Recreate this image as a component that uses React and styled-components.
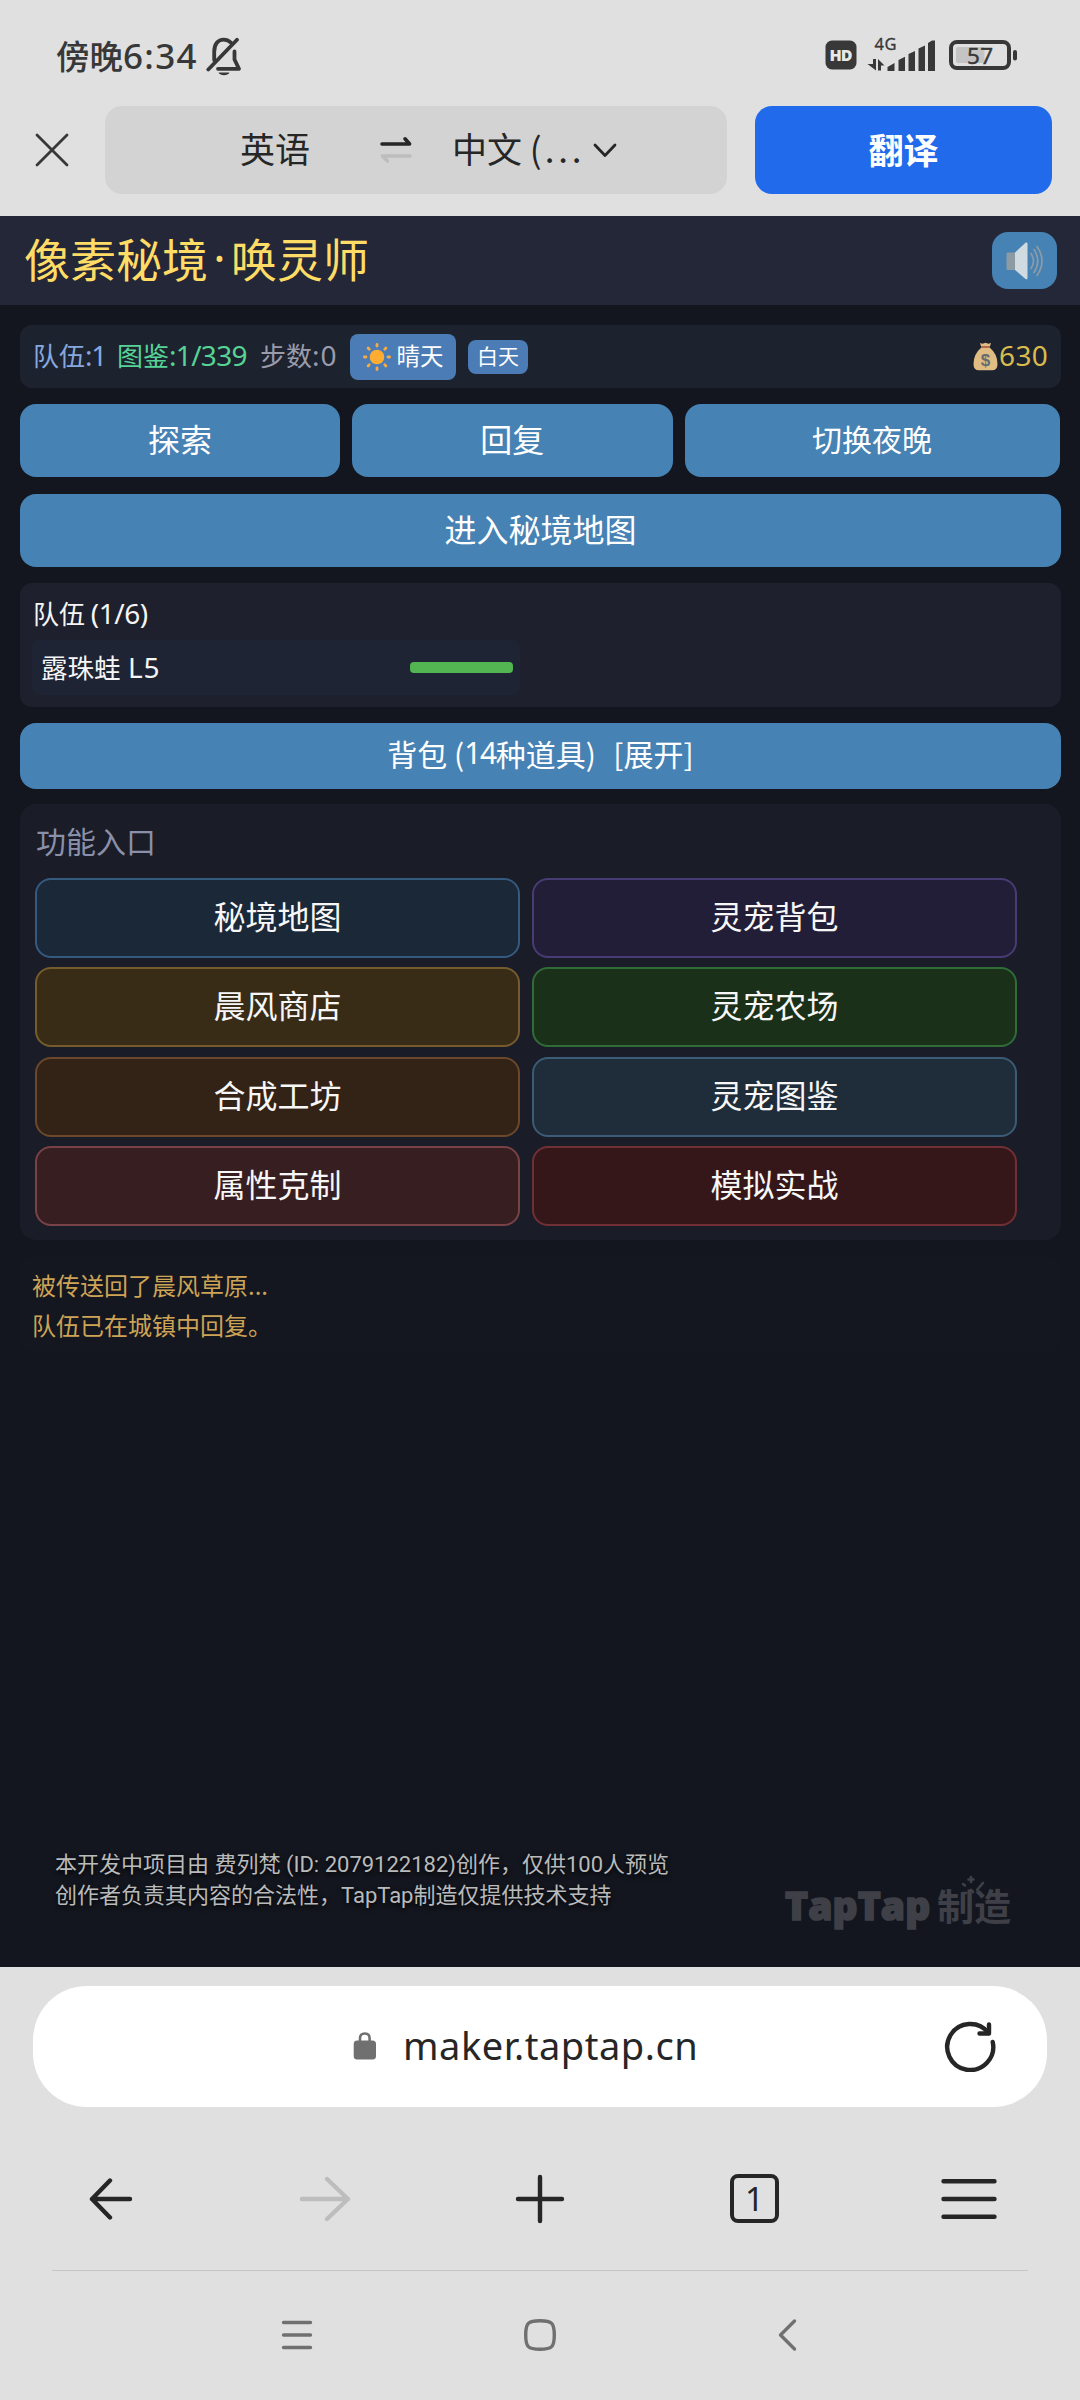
import React from "react";
import styled, { createGlobalStyle } from "styled-components";

const Global = createGlobalStyle`
  * { box-sizing: border-box; }
  html, body { margin: 0; padding: 0; background: #e0e0e0; }
  body { font-family: "Noto Sans CJK SC", "Noto Sans", sans-serif; color: #262626; }
  svg { display: block; flex: none; }
`;

const Phone = styled.div`
  width: 1080px;
  height: 2400px;
  display: flex;
  flex-direction: column;
  background: #e0e0e0;
  overflow: hidden;
`;

/* ---------- system status bar ---------- */
const StatusBar = styled.header`
  height: 106px;
  padding: 30px 62px 31px 56px;
  display: flex;
  justify-content: space-between;
  align-items: flex-start;
  color: #383838;
`;
const StatusGroup = styled.div`
  display: flex;
  align-items: flex-start;
  padding-top: 7px;
`;
const Clock = styled.div`
  font-size: 33.5px;
  line-height: 36px;
  font-weight: 500;
  white-space: nowrap;
  width: 150px;
`;
const ClockDigits = styled.span`
  font-family: "Noto Sans", sans-serif;
  font-size: 35px;
  letter-spacing: 1.3px;
`;

/* ---------- translate bar ---------- */
const TranslateBar = styled.div`
  height: 110px;
  padding: 0 28px 22px 35px;
  display: flex;
  align-items: stretch;
`;
const CloseButton = styled.div`
  width: 70px;
  display: flex;
  align-items: center;
  flex: none;
`;
const LanguagePill = styled.div`
  width: 622px;
  height: 88px;
  flex: none;
  border-radius: 17px;
  background: #d3d3d3;
  display: flex;
  align-items: center;
  padding-left: 135px;
  font-size: 35px;
  line-height: 48px;
  white-space: nowrap;
`;
const Language = styled.div`
  width: ${(p) => p.$width}px;
  padding-left: ${(p) => p.$indent || 0}px;
  padding-bottom: 4px;
`;
const Dots = styled.span`
  margin-left: 3px;
  letter-spacing: 3.8px;
`;
const TranslateButton = styled.div`
  width: 297px;
  height: 88px;
  margin-left: 28px;
  border-radius: 17px;
  background: #216aeb;
  color: #fff;
  font-size: 35px;
  font-weight: 700;
  display: flex;
  align-items: center;
  justify-content: center;
  padding-bottom: 4px;
`;

/* ---------- game page ---------- */
const Game = styled.main`
  height: 1751px;
  background: #13161e;
  display: flex;
  flex-direction: column;
`;
const GameHeader = styled.div`
  height: 89px;
  flex: none;
  background: #242737;
  display: flex;
  align-items: center;
  justify-content: space-between;
  padding: 0 23px 0 24px;
`;
const GameTitle = styled.h1`
  margin: 0;
  font-size: 46px;
  line-height: 60px;
  font-weight: 400;
  color: #ffdc66;
  padding-bottom: 7px;
  display: flex;
`;
const TitleDot = styled.span`
  width: 23px;
  font-family: "Noto Sans", sans-serif;
  text-align: center;
`;
const SoundButton = styled.div`
  width: 65px;
  height: 57px;
  border-radius: 16px;
  background: #4682b4;
  display: flex;
  align-items: center;
  justify-content: center;
`;
const Content = styled.div`
  padding: 20px 19px 0 20px;
  display: flex;
  flex-direction: column;
`;
const Stats = styled.div`
  height: 63px;
  border-radius: 12px;
  background: #1d222f;
  display: flex;
  align-items: center;
  justify-content: space-between;
  padding: 0 13px 0 13px;
`;
const StatGroup = styled.div`
  display: flex;
  align-items: center;
`;
const Stat = styled.div`
  width: ${(p) => p.$width}px;
  color: ${(p) => p.$color};
  font-size: 26px;
  line-height: 36px;
  white-space: nowrap;
  padding-bottom: 4px;
`;
const Num = styled.span`
  font-family: "Noto Sans", sans-serif;
  font-size: ${(p) => p.$font || 28}px;
  letter-spacing: ${(p) => p.$track || 0}px;
`;
const Badge = styled.div`
  width: ${(p) => p.$width}px;
  height: ${(p) => p.$height}px;
  margin-right: 12px;
  border-radius: 8px;
  background: #4b7cb5;
  color: #fff;
  font-size: ${(p) => p.$font}px;
  display: flex;
  align-items: center;
  justify-content: center;
  gap: 6px;
  line-height: 30px;
`;
const BadgeLabel = styled.span`
  padding-bottom: 4px;
`;
const Money = styled.div`
  display: flex;
  align-items: center;
  gap: 1px;
  color: #d8bc4e;
`;
const ActionRow = styled.div`
  margin-top: 16px;
  display: grid;
  grid-template-columns: 320px 320.5px 375px;
  gap: 12px;
`;
const Action = styled.div`
  height: ${(p) => p.$height || 73}px;
  margin-top: ${(p) => p.$top || 0}px;
  border-radius: 16px;
  background: #4682b4;
  color: #fff;
  font-size: ${(p) => p.$font || 32}px;
  line-height: 46px;
  display: flex;
  align-items: center;
  justify-content: center;
  padding-bottom: 6px;
  white-space: pre;
`;
const BagState = styled.span`
  margin-left: 4px;
`;
const TeamPanel = styled.section`
  height: 124px;
  margin-top: 16px;
  border-radius: 12px;
  background: #1e202d;
  padding: 11px 12px;
`;
const TeamTitle = styled.div`
  height: 46px;
  padding-left: 1px;
  font-size: 26px;
  line-height: 37px;
  color: #f5f5f5;
`;
const Pet = styled.div`
  width: 488px;
  height: 55px;
  border-radius: 8px;
  background: #1e2434;
  display: flex;
  align-items: center;
  justify-content: space-between;
  padding: 0 7px 0 9px;
`;
const PetName = styled.div`
  font-size: 26.5px;
  line-height: 36px;
  color: #f5f5f5;
  padding-bottom: 2px;
`;
const PetLevel = styled(Num)`
  margin-left: 1.5px;
`;
const HealthBar = styled.div`
  width: 103px;
  height: 11px;
  border-radius: 4px;
  background: #52b552;
`;
const MenuPanel = styled.section`
  height: 436px;
  margin-top: 15px;
  border-radius: 16px;
  background: #1a1c27;
  padding: 14px 15px 15px;
`;
const MenuTitle = styled.div`
  height: 60px;
  padding-left: 1px;
  font-size: 30px;
  line-height: 44px;
  color: #8b90aa;
`;
const MenuGrid = styled.div`
  display: grid;
  grid-template-columns: 485px 485px;
  grid-auto-rows: 80px;
  column-gap: 12px;
  row-gap: 9.3px;
`;
const MenuItem = styled.div`
  border: 2px solid ${(p) => p.$border};
  border-radius: 16px;
  background: ${(p) => p.$bg};
  color: #f7f7f7;
  font-size: 32px;
  line-height: 46px;
  display: flex;
  align-items: center;
  justify-content: center;
  padding-bottom: 6px;
`;
const Log = styled.section`
  margin-top: 16px;
  height: 96px;
  border-radius: 12px;
  background: #14171f;
  padding: 9px 12px;
  font-size: 24px;
  line-height: 40px;
  color: #cda355;
`;
const LogEntry = styled.div`
  white-space: nowrap;
`;
const Credits = styled.footer`
  margin-top: auto;
  height: 127px;
  padding: 0 69px 0 55px;
  display: flex;
  justify-content: space-between;
`;
const Disclaimer = styled.div`
  padding-top: 9px;
  font-family: Roboto, "Noto Sans CJK SC", sans-serif;
  font-size: 22px;
  line-height: 31px;
  color: #b9babb;
  white-space: nowrap;
  text-shadow: 0 2px 5px #000;
`;
const Brand = styled.div`
  display: flex;
  color: #3f4047;
  height: 100px;
  padding-top: 40px;
`;
const BrandName = styled.div`
  width: 152px;
  font-family: "Open Sans", sans-serif;
  font-weight: 800;
  font-size: 39px;
  line-height: 50px;
  letter-spacing: 0.1px;
  -webkit-text-stroke: 1.6px #3f4047;
`;
const BrandSuffix = styled.div`
  position: relative;
  width: 74px;
  font-size: 37px;
  line-height: 50px;
  font-weight: 700;
`;
const Sparkles = styled.svg`
  position: absolute;
  left: 24px;
  top: -5px;
`;

/* ---------- browser controls ---------- */
const AddressArea = styled.div`
  height: 153px;
  padding: 19px 33px 0;
`;
const Address = styled.div`
  height: 121px;
  border-radius: 54px;
  background: #fff;
  display: flex;
  align-items: center;
  justify-content: space-between;
  padding: 0 51px 1px 320px;
`;
const AddressText = styled.div`
  display: flex;
  align-items: center;
  gap: 26px;
  font-family: "Noto Sans", sans-serif;
  font-size: 38px;
  line-height: 50px;
  color: #262626;
`;
const Host = styled.span`
  letter-spacing: 0.55px;
  padding-bottom: 2px;
`;
const BrowserNav = styled.nav`
  height: 151px;
  margin: 0 52px;
  padding-top: 7px;
  border-bottom: 1px solid #c6c6c6;
  display: flex;
  align-items: flex-start;
  justify-content: space-between;
`;
const NavSlot = styled.div`
  width: 118px;
  height: 143px;
  display: flex;
  align-items: center;
  justify-content: center;
`;
const TabCount = styled.div`
  width: 49px;
  height: 49px;
  border: 4.4px solid #262626;
  border-radius: 8px;
  display: flex;
  align-items: center;
  justify-content: center;
  font-family: "Noto Sans", sans-serif;
  font-size: 33px;
  line-height: 40px;
`;
const SystemNav = styled.nav`
  flex: 1;
  padding: 0 278px 2px 280px;
  display: flex;
  align-items: center;
  justify-content: space-between;
`;

const Line = ({ w, h, color = "#262626", width = 4.4, d, children }) => (
  <svg width={w} height={h} viewBox={`0 0 ${w} ${h}`} fill="none" stroke={color} strokeWidth={width} strokeLinecap="round" strokeLinejoin="round">
    {d && <path d={d} />}
    {children}
  </svg>
);

const BellOff = () => (
  <svg width="36" height="39" viewBox="0 0 36 39" fill="none" stroke="#383838" strokeWidth="3.8" strokeLinecap="round" strokeLinejoin="round">
    <path d="M8.2 23V15C8.2 7 12 2.6 17.7 2.6C20.6 2.6 23.3 3.8 25 5.8" />
    <path d="M28.5 14.5V22.5L33 31.8H12" />
    <path d="M31 2.8L2.3 32.5" />
    <path d="M12.5 35.5H23.5C22 39.2 14 39.2 12.5 35.5Z" fill="#383838" stroke="none" />
  </svg>
);

const StatusIcons = () => (
  <svg width="193" height="45" viewBox="825 30 193 45" fill="#383838">
    <rect x="825.5" y="40.5" width="31" height="29" rx="6.5" />
    <text x="841" y="61.2" fontSize="16" fontWeight="800" fontFamily="Open Sans, sans-serif" fill="#e8e8e8" textAnchor="middle" textLength="23">HD</text>
    <text x="874.5" y="50" fontSize="16.5" fontFamily="Noto Sans, sans-serif" textLength="22" stroke="#383838" strokeWidth="0.3">4G</text>
    <path d="M873 59H876V70.5L867.5 64H873ZM878 70.5V59L884.5 65.5H881V70.5Z" />
    <path d="M887.5 71V67L894.5 63V71ZM898.5 71V60L905 56.8V71ZM908.5 71V54L915 51V71ZM918.5 71V48.5L925 45.5V71ZM928 71V43L932 40.5H935V71Z" />
    <rect x="956" y="47" width="28.5" height="16" rx="2" fill="#c4c4c4" />
    <rect x="951" y="42" width="58" height="26" rx="6" fill="none" stroke="#383838" strokeWidth="4" />
    <rect x="1013" y="50" width="4" height="10.5" rx="2" />
    <text x="980" y="63.5" fontSize="22.5" fontFamily="Noto Sans, sans-serif" textAnchor="middle" textLength="26" stroke="#383838" strokeWidth="0.4">57</text>
  </svg>
);

const Swap = () => (
  <svg width="32" height="28" viewBox="0 0 32 28" fill="none" strokeWidth="3.6" strokeLinecap="round" strokeLinejoin="round">
    <path d="M2 8H29.6L25 2.8" stroke="#262626" />
    <path d="M30 20H2.4L7.5 25" stroke="#bdbdbd" />
  </svg>
);

const Speaker = () => (
  <svg width="40" height="40" viewBox="0 0 40 40">
    <path d="M1.5 13Q1.5 11.5 3 11.5H10V29H3Q1.5 29 1.5 27.5Z" fill="#8d9ba5" />
    <path d="M10 11.5L20.5 1.8Q22.5 1 22.5 3V37Q22.5 39 20.5 38L10 29Z" fill="#cfdae1" />
    <path d="M26 12.5Q31 20 26 27.5M29 8.5Q36.5 20 29 31.5M32 5.5Q42 20 32 34.5" fill="none" stroke="#8d9ba5" strokeWidth="1.7" strokeLinecap="round" />
  </svg>
);

const Sun = () => (
  <svg width="28" height="28" viewBox="-14 -14 28 28">
    <circle r="7.3" fill="#ffac33" />
    {[0, 45, 90, 135, 180, 225, 270, 315].map((a) => (
      <path key={a} d="M0 -12.6V-11" stroke="#f5ab45" strokeWidth="2.8" strokeLinecap="round" transform={`rotate(${a})`} />
    ))}
  </svg>
);

const MoneyBag = () => (
  <svg width="25" height="29" viewBox="0 0 25 29">
    <path d="M7 1L9.5 1.8L12.5 0.8L15.5 1.8L18 1L16.6 5.5Q24.5 12 24.5 22Q24.5 28.3 19 28.3H6Q0.5 28.3 0.5 22Q0.5 12 8.4 5.5Z" fill="#dfbd83" />
    <path d="M8 5H17" stroke="#b66b4b" strokeWidth="2" />
    <text x="12.5" y="23.5" fontSize="17" fontWeight="700" fontFamily="Liberation Sans, sans-serif" textAnchor="middle" fill="#666c70">$</text>
  </svg>
);

const Lock = () => (
  <svg width="24" height="30" viewBox="0 0 24 30">
    <path d="M7 12V7.2Q7 2.5 11.8 2.5Q16.6 2.5 16.6 7.2V12" fill="none" stroke="#707070" strokeWidth="2.6" />
    <rect x="0.7" y="9.5" width="22.3" height="19" rx="3.5" fill="#707070" />
  </svg>
);

const MENU = [
  ["秘境地图", "#1a2838", "#345a80"],
  ["灵宠背包", "#231e38", "#483c74"],
  ["晨风商店", "#382c17", "#765c2c"],
  ["灵宠农场", "#1a3019", "#2f6c38"],
  ["合成工坊", "#332316", "#6b482b"],
  ["灵宠图鉴", "#1e2d39", "#3b5b76"],
  ["属性克制", "#371f21", "#784246"],
  ["模拟实战", "#35171a", "#713034"],
];

export default function App() {
  return (
    <Phone>
      <Global />
      <StatusBar>
        <StatusGroup>
          <Clock>傍晚<ClockDigits>6:34</ClockDigits></Clock>
          <BellOff />
        </StatusGroup>
        <StatusIcons />
      </StatusBar>

      <TranslateBar>
        <CloseButton>
          <Line w={34} h={34} width={2.8} color="#383838" d="M2 2L32 32M32 2L2 32" />
        </CloseButton>
        <LanguagePill>
          <Language $width={140}>英语</Language>
          <Swap />
          <Language $width={181} $indent={40}>中文 (<Dots>...</Dots></Language>
          <Line w={24} h={15} width={2.8} d="M2 2L12 12.5L22 2" />
        </LanguagePill>
        <TranslateButton>翻译</TranslateButton>
      </TranslateBar>

      <Game>
        <GameHeader>
          <GameTitle>像素秘境<TitleDot>·</TitleDot>唤灵师</GameTitle>
          <SoundButton><Speaker /></SoundButton>
        </GameHeader>
        <Content>
          <Stats>
            <StatGroup>
              <Stat $width={84} $color="#86a8df">队伍<Num $track={-1.2}>:1</Num></Stat>
              <Stat $width={143} $color="#56d496">图鉴<Num $track={-0.7}>:1/339</Num></Stat>
              <Stat $width={90} $color="#9a9bab">步数<Num $track={1}>:0</Num></Stat>
              <Badge $width={106} $height={46} $font={23.5}><Sun /><BadgeLabel>晴天</BadgeLabel></Badge>
              <Badge $width={60} $height={34} $font={21}><BadgeLabel>白天</BadgeLabel></Badge>
            </StatGroup>
            <Money>
              <MoneyBag />
              <Stat $width={49} $color="#d8bc4e"><Num $track={0.4}>630</Num></Stat>
            </Money>
          </Stats>
          <ActionRow>
            <Action>探索</Action>
            <Action>回复</Action>
            <Action $font={30}>切换夜晚</Action>
          </ActionRow>
          <Action $top={17}>进入秘境地图</Action>
          <TeamPanel>
            <TeamTitle>队伍 <Num $track={-0.5}>(1/6)</Num></TeamTitle>
            <Pet>
              <PetName>露珠蛙 <PetLevel $track={1}>L5</PetLevel></PetName>
              <HealthBar />
            </Pet>
          </TeamPanel>
          <Action $top={16} $height={66} $font={30}>背包 (<Num $font={30} $track={-1.4}>14</Num>种道具)  <BagState>[展开]</BagState></Action>
          <MenuPanel>
            <MenuTitle>功能入口</MenuTitle>
            <MenuGrid>
              {MENU.map(([label, bg, border]) => (
                <MenuItem key={label} $bg={bg} $border={border}>{label}</MenuItem>
              ))}
            </MenuGrid>
          </MenuPanel>
          <Log>
            <LogEntry>被传送回了晨风草原...</LogEntry>
            <LogEntry>队伍已在城镇中回复。</LogEntry>
          </Log>
        </Content>
        <Credits>
          <Disclaimer>
            <div>本开发中项目由 费列梵 (ID: 2079122182)创作，仅供100人预览</div>
            <div>创作者负责其内容的合法性，TapTap制造仅提供技术支持</div>
          </Disclaimer>
          <Brand>
            <BrandName>TapTap</BrandName>
            <BrandSuffix>
              制造
              <Sparkles width="26" height="22" viewBox="0 0 26 22" fill="none" stroke="#3f4047" strokeWidth="2.6" strokeLinecap="round">
                <path d="M10 2V7M7.5 4.5H12.5M2 9L4 10.5M2 18H5M10 15L12 17M22 8L16 15" />
              </Sparkles>
            </BrandSuffix>
          </Brand>
        </Credits>
      </Game>

      <AddressArea>
        <Address>
          <AddressText><Lock /><Host>maker.taptap.cn</Host></AddressText>
          <Line w={52} h={52} d="M48.7 22A23 23 0 1 1 44.5 13">
            <path d="M45 4.5V13.5H35.5" />
          </Line>
        </Address>
      </AddressArea>
      <BrowserNav>
        <NavSlot>
          <Line w={44} h={44} d="M3 22H41M21 3.5L3 22L21 40.5" />
        </NavSlot>
        <NavSlot>
          <Line w={52} h={48} color="#bdbdbd" d="M2 24H48M27 4L48 24L27 44" />
        </NavSlot>
        <NavSlot>
          <Line w={50} h={50} d="M3 25H47M25 3V47" />
        </NavSlot>
        <NavSlot><TabCount>1</TabCount></NavSlot>
        <NavSlot>
          <Line w={58} h={42} d="M3.5 3.2H54.5M3.5 21H54.5M3.5 38.8H54.5" />
        </NavSlot>
      </BrowserNav>
      <SystemNav>
        <Line w={34} h={34} width={3.4} color="#707070" d="M3.5 4.5H30.5M3.5 17H30.5M3.5 29.5H30.5" />
        <Line w={36} h={36} width={3.4} color="#707070">
          <path d="M18 3.7C30 3.7 32.3 6 32.3 18S30 32.3 18 32.3S3.7 30 3.7 18S6 3.7 18 3.7Z" />
        </Line>
        <Line w={36} h={36} width={3.4} color="#707070" d="M28.5 4L14.5 18L28.5 32" />
      </SystemNav>
    </Phone>
  );
}
